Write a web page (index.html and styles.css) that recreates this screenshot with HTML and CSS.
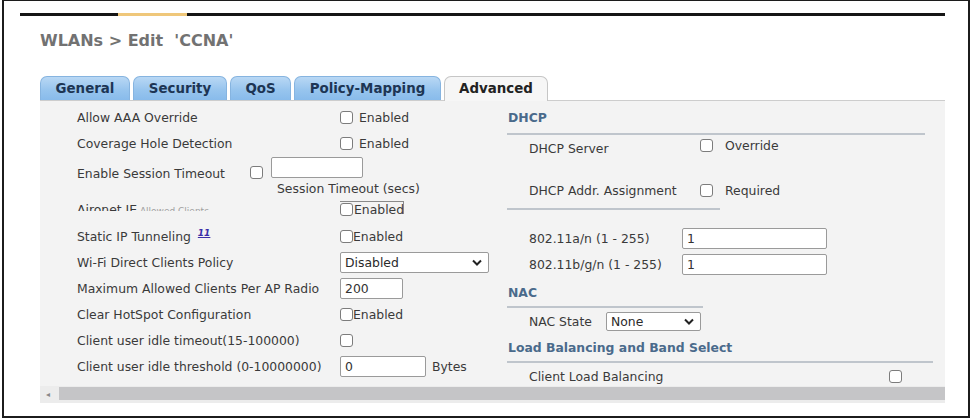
FILE: index.html
```html
<!DOCTYPE html>
<html lang="en">
<head>
    <meta charset="UTF-8">
    <title>WLANs &gt; Edit 'CCNA'</title>
    <link rel="stylesheet" href="styles.css">
</head>
<body>
<div class="frame">
    <div class="topline"></div>
    <div class="content">
        <h1 class="title">WLANs &gt; Edit &nbsp;'CCNA'</h1>

        <div class="tabs">
            <div class="tab tab-general">General</div>
            <div class="tab tab-security">Security</div>
            <div class="tab tab-qos">QoS</div>
            <div class="tab tab-policy">Policy-Mapping</div>
            <div class="tab tab-advanced active">Advanced</div>
        </div>

        <div class="panel">
            <div class="panel-body">
                <div class="col-left">
                    <div class="row">
                        <span class="label">Allow AAA Override</span>
                        <input type="checkbox" class="cb"><span class="cb-text">Enabled</span>
                    </div>
                    <div class="row">
                        <span class="label">Coverage Hole Detection</span>
                        <input type="checkbox" class="cb"><span class="cb-text">Enabled</span>
                    </div>
                    <div class="row row-session">
                        <span class="label label-short">Enable Session Timeout</span>
                        <input type="checkbox" class="cb cb-session">
                        <div class="session-box">
                            <input type="text" class="txt txt-session">
                            <span class="caption">Session Timeout (secs)</span>
                        </div>
                    </div>
                    <div class="row row-glitch">
                        <span class="label clip">Aironet IE<span class="faded"> Allowed Clients</span></span>
                        <span class="glitch-box"><input type="checkbox" class="cb"><span class="cb-text tight clip">Enabled</span></span>
                    </div>
                    <div class="row">
                        <span class="label">Static IP Tunneling <a class="sup" href="#">11</a></span>
                        <input type="checkbox" class="cb"><span class="cb-text tight">Enabled</span>
                    </div>
                    <div class="row">
                        <span class="label">Wi-Fi Direct Clients Policy</span>
                        <span class="select select-wifi">Disabled
                            <svg class="chev" width="10" height="7" viewBox="0 0 10 7"><path d="M1 1.5 L5 5.5 L9 1.5" fill="none" stroke="#222" stroke-width="2"/></svg>
                        </span>
                    </div>
                    <div class="row">
                        <span class="label">Maximum Allowed Clients Per AP Radio</span>
                        <input type="text" class="txt txt-max" value="200">
                    </div>
                    <div class="row">
                        <span class="label">Clear HotSpot Configuration</span>
                        <input type="checkbox" class="cb"><span class="cb-text tight">Enabled</span>
                    </div>
                    <div class="row">
                        <span class="label">Client user idle timeout(15-100000)</span>
                        <input type="checkbox" class="cb">
                    </div>
                    <div class="row">
                        <span class="label">Client user idle threshold (0-10000000)</span>
                        <input type="text" class="txt txt-bytes" value="0"><span class="unit">Bytes</span>
                    </div>
                </div>

                <div class="col-right">
                    <div class="sec-head">DHCP</div>
                    <div class="rule rule-dhcp"></div>
                    <div class="row">
                        <span class="rlabel">DHCP Server</span>
                        <input type="checkbox" class="cb cb-up"><span class="cb-text wide">Override</span>
                    </div>
                    <div class="row row-addr">
                        <span class="rlabel">DHCP Addr. Assignment</span>
                        <input type="checkbox" class="cb"><span class="cb-text wide">Required</span>
                    </div>
                    <div class="rule rule-addr"></div>
                    <div class="row row-radio">
                        <span class="rlabel rlabel-num">802.11a/n (1 - 255)</span>
                        <input type="text" class="txt txt-radio" value="1">
                    </div>
                    <div class="row">
                        <span class="rlabel rlabel-num">802.11b/g/n (1 - 255)</span>
                        <input type="text" class="txt txt-radio" value="1">
                    </div>
                    <div class="sec-head sec-nac">NAC</div>
                    <div class="rule rule-nac"></div>
                    <div class="row">
                        <span class="rlabel rlabel-nac">NAC State</span>
                        <span class="select select-nac">None
                            <svg class="chev" width="10" height="7" viewBox="0 0 10 7"><path d="M1 1.5 L5 5.5 L9 1.5" fill="none" stroke="#222" stroke-width="2"/></svg>
                        </span>
                    </div>
                    <div class="sec-head sec-lb">Load Balancing and Band Select</div>
                    <div class="rule rule-lb"></div>
                    <div class="row">
                        <span class="rlabel rlabel-lb">Client Load Balancing</span>
                        <input type="checkbox" class="cb">
                    </div>
                </div>
            </div>
            <div class="scrollbar">
                <span class="arrow">&#9666;</span>
                <div class="thumb"></div>
            </div>
        </div>
    </div>
</div>
</body>
</html>
```

FILE: styles.css
```css
body {
    margin: 0;
    background: #fff;
    font-family: "DejaVu Sans", Verdana, sans-serif;
    font-size: 12.4px;
    color: #3a3a3a;
}
.frame {
    margin: 0 3px 0 2px;
    height: 418px;
    border: 2px solid #1c1c1c;
    border-top-width: 1px;
    box-sizing: border-box;
    overflow: hidden;
}
.topline {
    margin: 12px 0 0 16px;
    width: 925px;
    height: 3px;
    background: linear-gradient(to right, #161616 98px, #efc77a 98px, #efc77a 167px, #161616 167px);
}
.content {
    padding-left: 36px;
}
.title {
    margin: 15px 0 0 0;
    font-size: 16px;
    line-height: 20px;
    font-weight: bold;
    color: #727272;
}

/* tabs */
.tabs {
    display: flex;
    align-items: flex-end;
    margin-top: 25px;
    height: 24px;
}
.tab {
    box-sizing: border-box;
    height: 24px;
    margin-right: 3px;
    border: 1px solid #86b4e0;
    border-bottom: none;
    border-radius: 7px 7px 0 0;
    background: linear-gradient(#b9d8f4, #98c5ee 55%, #88bbeb);
    font-size: 13.4px;
    font-weight: bold;
    color: #1d3554;
    text-align: center;
    line-height: 23px;
}
.tab-general { width: 90px; }
.tab-security { width: 94px; }
.tab-qos { width: 61px; }
.tab-policy { width: 147px; }
.tab-advanced { width: 104px; }
.tab.active {
    background: #f6f6f6;
    border-color: #c6c6c6;
    color: #222;
    height: 25px;
    margin-bottom: -1px;
    position: relative;
}

.panel {
    width: 905px;
    background: #f3f3f3;
    border-top: 1px solid #cdcdcd;
    box-sizing: border-box;
}
.panel-body {
    display: flex;
    height: 285px;
    overflow: hidden;
}
.col-left {
    width: 467px;
    padding: 3px 0 0 37px;
    box-sizing: border-box;
}
.col-right {
    flex: 1;
}

.row {
    display: flex;
    align-items: center;
    height: 26px;
    white-space: nowrap;
}
.label {
    width: 263px;
    flex: none;
}
.label-short {
    width: 173px;
}
.cb {
    -webkit-appearance: none;
    appearance: none;
    margin: 0;
    width: 13px;
    height: 13px;
    border: 1px solid #7c7c7c;
    border-radius: 3px;
    background: #fff;
    box-sizing: border-box;
    flex: none;
}
.cb-text {
    margin-left: 6px;
}
.cb-text.tight {
    margin-left: 0;
}
.cb-text.wide {
    margin-left: 12px;
}
.txt {
    box-sizing: border-box;
    height: 21px;
    margin: 0;
    border: 1px solid #9a9a9a;
    border-radius: 2px;
    background: #fff;
    font-family: "DejaVu Sans", Verdana, sans-serif;
    font-size: 12.4px;
    color: #333;
    padding: 0 4px;
}

/* session timeout row */
.row-session {
    height: 41px;
    align-items: flex-start;
}
.row-session .label {
    margin-top: 10px;
}
.cb-session {
    margin-top: 10px;
}
.session-box {
    display: flex;
    flex-direction: column;
    margin-left: 8px;
    margin-top: 1px;
}
.txt-session {
    width: 92px;
}
.caption {
    margin: 3px 0 0 6px;
}

/* half rendered row */
.row-glitch {
    align-items: flex-start;
    padding-top: 4px;
    box-sizing: border-box;
}
.clip {
    display: block;
    height: 10px;
    overflow: hidden;
    line-height: 17px;
}
.faded {
    color: #a0a0a0;
    font-size: 9px;
}
.glitch-box {
    display: flex;
    align-items: flex-start;
    padding-top: 1px;
    width: 64px;
    height: 13px;
    border: 1px solid #8a8a8a;
    border-left: none;
    border-bottom: none;
    box-sizing: border-box;
}
.glitch-box .clip {
    line-height: 14px;
    height: 11px;
    margin-left: 1px;
}

.sup {
    font-size: 9px;
    font-weight: bold;
    font-style: italic;
    color: #3a2ea8;
    vertical-align: 5px;
    margin-left: 3px;
}

.select {
    position: relative;
    box-sizing: border-box;
    height: 21px;
    border: 1px solid #9a9a9a;
    border-radius: 2px;
    background: #fff;
    padding-left: 4px;
    line-height: 19px;
    color: #2a2a2a;
}
.select-wifi {
    width: 149px;
}
.chev {
    position: absolute;
    right: 6px;
    top: 6px;
}
.txt-max {
    width: 63px;
}
.txt-bytes {
    width: 86px;
}
.unit {
    margin-left: 6px;
}

/* right column */
.sec-head {
    padding: 5px 0 0 1px;
    line-height: 24px;
    font-weight: bold;
    color: #4a6a8b;
}
.rule {
    height: 2px;
    background: #bfc5cc;
}
.rule-dhcp { width: 418px; margin-top: 3px; }
.rule-addr { width: 213px; margin-top: 5px; }
.rule-nac { width: 196px; margin-top: 1px; }
.rule-lb { width: 426px; margin-top: 1px; }

.rlabel {
    box-sizing: border-box;
    width: 193px;
    padding-left: 22px;
    flex: none;
}
.cb-up {
    margin-top: -6px;
}
.cb-up + .cb-text {
    margin-top: -6px;
}
.row-addr {
    margin-top: 16px;
}
.row-radio {
    margin-top: 15px;
}
.rlabel-num {
    width: 175px;
}
.txt-radio {
    width: 145px;
}
.sec-nac {
    padding-top: 4px;
}
.rlabel-nac {
    width: 99px;
}
.select-nac {
    width: 95px;
    height: 19px;
    line-height: 17px;
}
.select-nac .chev {
    top: 5px;
}
.sec-lb {
    padding-top: 2px;
}
.rlabel-lb {
    width: 382px;
}

.scrollbar {
    display: flex;
    align-items: center;
    height: 17px;
    background: #ececec;
}
.arrow {
    width: 19px;
    font-size: 8px;
    color: #888;
    padding-left: 6px;
    box-sizing: border-box;
}
.thumb {
    flex: 1;
    height: 13px;
    background: #c5c5c7;
    margin-top: -2px;
}
```
